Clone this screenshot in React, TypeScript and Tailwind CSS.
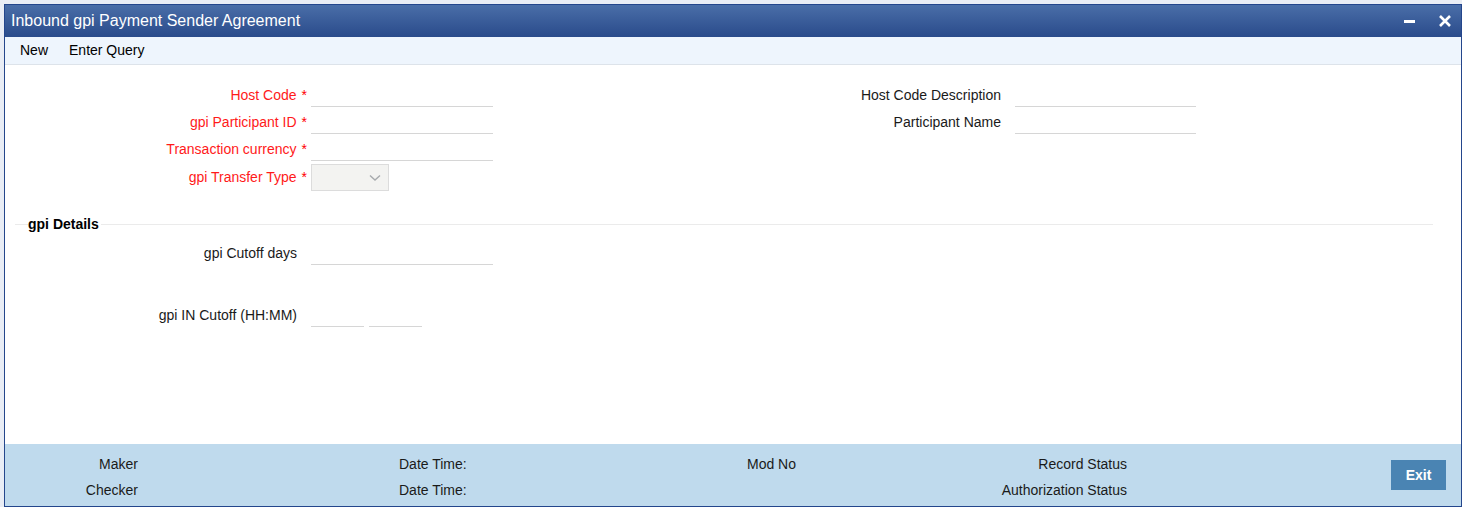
import React from "react";

const font = { fontFamily: '"Liberation Sans", Arial, sans-serif' };

function Req() {
  return <span className="ml-[5px] text-[#ff0000]">*</span>;
}

function Field({ w = "w-[182px]" }: { w?: string }) {
  return <div className={`h-[25px] ${w} border-b border-[#d6d6d6]`} />;
}

function FooterRow({ who, mod, status }: { who: string; mod: string; status: string }) {
  return (
    <div className="flex h-[26px] items-center whitespace-nowrap">
      <span className="w-[133px] text-right">{who}</span>
      <span className="ml-[261px] w-[348px]">Date Time:</span>
      <div className="flex w-[380px] justify-between">
        <span>{mod}</span>
        <span>{status}</span>
      </div>
    </div>
  );
}

export default function App() {
  return (
    <div className="h-[507px] w-[1462px] bg-[#e9edf5] pl-[4px] pt-[4px]" style={font}>
      <div className="flex h-[503px] w-[1458px] flex-col border border-[#24468c] bg-white">
        {/* title bar */}
        <div className="flex h-[32px] items-center justify-between bg-gradient-to-b from-[#4a6ea8] to-[#2a4b8b] pl-[6px] pr-[9px] text-white">
          <span className="text-[16px]">Inbound gpi Payment Sender Agreement</span>
          <div className="flex items-center gap-[22px]">
            <svg width="12" height="12" viewBox="0 0 12 12">
              <rect x="0" y="5" width="11" height="3" fill="white" />
            </svg>
            <svg width="14" height="14" viewBox="0 0 14 14">
              <path d="M2 2 L12 12 M12 2 L2 12" stroke="white" strokeWidth="2.6" />
            </svg>
          </div>
        </div>

        {/* toolbar */}
        <div className="flex h-[28px] items-center gap-[21px] border-b border-[#dde3ea] bg-[#eef5fd] pl-[15px] text-[14px] text-black">
          <span>New</span>
          <span>Enter Query</span>
        </div>

        {/* body */}
        <div className="flex-1 pt-[17px] text-[14px]">
          <div className="flex">
            <div className="w-[600px]">
              {[
                "Host Code",
                "gpi Participant ID",
                "Transaction currency",
              ].map((l) => (
                <div key={l} className="flex h-[27px] items-start">
                  <div className="flex h-[24px] w-[302px] items-center justify-end pt-[2px] text-[#ff1a1a]">
                    {l}
                    <Req />
                  </div>
                  <div className="ml-[4px]">
                    <Field w="w-[182px] h-[24px]" />
                  </div>
                </div>
              ))}
              <div className="flex h-[28px] items-end">
                <div className="flex h-[27px] w-[302px] items-center justify-end text-[#ff1a1a]">
                  gpi Transfer Type
                  <Req />
                </div>
                <div className="ml-[4px] flex h-[27px] w-[78px] items-center justify-end border border-[#dcdcdc] bg-[#f3f3f1] pr-[7px]">
                  <svg width="12" height="8" viewBox="0 0 12 8">
                    <path d="M1 1.5 L6 6 L11 1.5" stroke="#a7aaad" strokeWidth="1.4" fill="none" />
                  </svg>
                </div>
              </div>
            </div>
            <div>
              {["Host Code Description", "Participant Name"].map((l) => (
                <div key={l} className="flex h-[27px] items-start">
                  <div className="flex h-[24px] w-[396px] items-center justify-end pt-[2px] text-[#1a1a1a]">
                    {l}
                  </div>
                  <div className="ml-[14px]">
                    <Field w="w-[181px] h-[24px]" />
                  </div>
                </div>
              ))}
            </div>
          </div>

          {/* gpi Details */}
          <div className="ml-[10px] mr-[28px] mt-[33px] border-t border-[#ebebeb]">
            <div className="-mt-[10px] ml-[13px] w-fit bg-white pr-[2px] text-[14px] font-bold leading-[18px] text-black">
              gpi Details
            </div>
          </div>
          <div className="mt-[7px] flex h-[27px] items-start">
            <div className="flex h-[25px] w-[292px] items-center justify-end pt-[2px] text-[#1a1a1a]">
              gpi Cutoff days
            </div>
            <div className="ml-[14px]">
              <Field />
            </div>
          </div>
          <div className="mt-[35px] flex h-[27px] items-start">
            <div className="flex h-[25px] w-[292px] items-center justify-end pt-[2px] text-[#1a1a1a]">
              gpi IN Cutoff (HH:MM)
            </div>
            <div className="ml-[14px] flex gap-[5px]">
              <Field w="w-[53px]" />
              <Field w="w-[53px]" />
            </div>
          </div>
        </div>

        {/* footer */}
        <div className="flex h-[62px] items-center bg-[#bfdaed] text-[14px] text-[#1a1a1a]">
          <div className="w-[1380px] pt-[5px]">
            <FooterRow who="Maker" mod="Mod No" status="Record Status" />
            <FooterRow who="Checker" mod="" status="Authorization Status" />
          </div>
          <button className="ml-[6px] h-[30px] w-[55px] bg-[#4a84b3] text-[14px] font-bold text-white">
            Exit
          </button>
        </div>
      </div>
    </div>
  );
}
